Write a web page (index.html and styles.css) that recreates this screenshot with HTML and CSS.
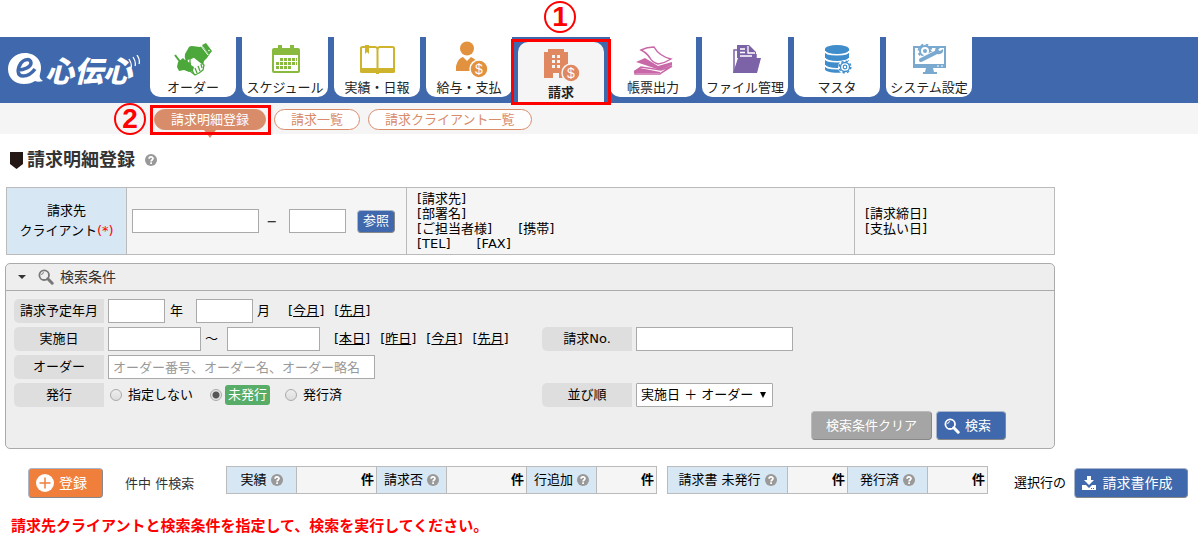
FILE: index.html
```html
<!DOCTYPE html>
<html lang="ja">
<head>
  <meta charset="UTF-8" />
  <meta name="viewport" content="width=device-width, initial-scale=1.0" />
  <title>請求明細登録 | e心伝心</title>
  <link rel="stylesheet" href="styles.css">
</head>
<body>
  <svg class="defs" width="0" height="0" aria-hidden="true">
    <symbol id="icon-help" viewBox="0 0 12 12">
      <circle cx="6" cy="6" r="6" fill="#999"/>
      <path d="M4.1 4.7C4.1 2.4 8 2.4 8 4.6 8 6 6.1 6 6.1 7.4" fill="none" stroke="#fff" stroke-width="1.7"/>
      <rect x="5.2" y="8.3" width="1.8" height="1.7" fill="#fff"/>
    </symbol>
    <symbol id="icon-search" viewBox="0 0 16 16">
      <circle cx="6.2" cy="6.2" r="4.8" fill="none" stroke="currentColor" stroke-width="1.8"/>
      <path d="M3.6 6A2.7 2.7 0 0 1 6 3.6" fill="none" stroke="currentColor" stroke-width="1"/>
      <path d="M9.8 9.8l4.4 4.4" stroke="currentColor" stroke-width="3" stroke-linecap="round"/>
    </symbol>
  </svg>

  <header class="header">
    <a class="logo" href="#" aria-label="e心伝心">
      <svg class="logo-mark" viewBox="0 0 38 34">
        <path d="M18 1C8 1 1 8 1 17s7 15 16 15c5 0 8-1 11-3 2 1 5 1 8 0-3-2-4-4-3-7C37 10 29 1 18 1z" fill="#fff"/>
        <path d="M11 18c6 0 13-3 13-7 0-5-7-4-10 0-4 6-4 13 2 13 5 0 9-3 12-7" fill="none" stroke="#3f69ac" stroke-width="3.5"/>
      </svg>
      <span class="logo-text">心伝心</span>
      <svg class="logo-wave" viewBox="0 0 12 16">
        <path d="M1 4c2 3 3 6 2 9M5 2c2 3 3 6 2 9M9 0c2 3 3 6 2 9" fill="none" stroke="#fff" stroke-width="1.3"/>
      </svg>
    </a>
    <nav class="tabs">
      <a class="tab" href="#">
        <svg viewBox="0 0 42 36">
          <path d="M13 12l4-7q1-1 3-1l8 1 2-1 7 9-2 3-3 3-1 5-11-8-4 2q-4 1-3-6z" fill="#4ca83a"/>
          <path d="M30 3l4-2 6 8-3 4z" fill="#4ca83a"/>
          <path d="M29 4l7 9" stroke="#fff" stroke-width="1"/>
          <circle cx="37" cy="8.500" r=".8" fill="#fff"/>
          <path d="M18 17l4-2 10 8-1 5-4 3-4 2-5-4z" fill="#fff" stroke="#4ca83a" stroke-width="1.300" stroke-linejoin="round"/>
          <path d="M20 28l2 4M23 26l2 5M26 24l2 5M29 22l1 4" fill="none" stroke="#4ca83a" stroke-width="1.300"/>
          <path d="M6 20l5-4 2 2 2-2 1 4 3 1v2l3 2-1 4-4 1-5-2-5 1-2-4z" fill="#4ca83a"/>
          <path d="M3 13l6 8" stroke="#4ca83a" stroke-width="2"/>
        </svg>
        オーダー
      </a>
      <a class="tab" href="#">
        <svg viewBox="0 0 42 36">
          <path d="M10 6h4V3h4v3h8V3h4v3h4q2 0 2 2v21q0 2-2 2H10q-2 0-2-2V8q0-2 2-2z" fill="#8aba3d"/>
          <rect x="10" y="13" width="24" height="16" fill="#fff"/>
          <path d="M16 17.500h17M12 21.500h21M12 25.500h16" stroke="#8aba3d" stroke-width="3" stroke-dasharray="3 1"/>
        </svg>
        スケジュール
      </a>
      <a class="tab" href="#">
        <svg viewBox="0 0 42 36">
          <path d="M5 6q0-1 2-1h12q2 0 2.500 2Q22 5 24 5h12q2 0 2 1v21H23l-1.500 2-1.500-2H5z" fill="#fff" stroke="#cdb42c" stroke-width="2"/>
          <path d="M4 26h15l2.500 2 2.500-2h15v4q0 1-2 1H23v1h-3v-1H6q-2 0-2-1z" fill="#cdb42c"/>
          <path d="M21.500 7v20" stroke="#cdb42c" stroke-width="2"/>
          <path d="M9 3h4v9l-2-2-2 2z" fill="#cdb42c"/>
        </svg>
        実績・日報
      </a>
      <a class="tab" href="#">
        <svg viewBox="0 0 42 36">
          <g fill="#e2923f">
            <circle cx="19" cy="6.500" r="7"/>
            <path d="M8 29v-5q2-8 7-9l4 4 4-4q5 2 6 6l-6 8z"/>
            <circle cx="31" cy="27" r="9" stroke="#fff" stroke-width="1.500"/>
          </g>
          <text class="coin" x="31" y="32">$</text>
        </svg>
        給与・支払
      </a>
      <div class="tab-current">
        <a class="tab active" href="#" aria-current="page">
          <svg viewBox="0 0 42 36">
            <path d="M4 5h4V2h16v3h4v26H4z" fill="#e08860"/>
            <path d="M12 9.500h3m2 0h3M12 14.500h3m2 0h3M12 19.500h3m2 0h3" stroke="#f5f5f5" stroke-width="3"/>
            <rect x="13" y="26" width="6" height="5" fill="#f5f5f5"/>
            <circle cx="31" cy="26" r="9" fill="#e08860" stroke="#f5f5f5" stroke-width="1.500"/>
            <text class="coin" x="31" y="31">$</text>
          </svg>
          請求
        </a>
        <span class="frame frame-tab"></span>
        <span class="step step-one">1</span>
      </div>
      <a class="tab" href="#">
        <svg viewBox="0 0 42 36">
          <path d="M3 29l6-4 20 3 11-4-11 7-1 1H3z" fill="#fff" stroke="#c868a8" stroke-width="1.500"/>
          <path d="M2 29l6-3 20 4v1H2z" fill="#c868a8"/>
          <path d="M4 20l9-4 13 8 14-4v3l-12 5z" fill="#c868a8"/>
          <path d="M9 8q6-3 13-3 5 9 17 12-6 4-13 5-6-2-8-6-3-5-9-8z" fill="#fff" stroke="#c868a8" stroke-width="1.500"/>
        </svg>
        帳票出力
      </a>
      <a class="tab" href="#">
        <svg viewBox="0 0 42 36">
          <path d="M10 31V8h3M32 12v4" fill="none" stroke="#7c63a8" stroke-width="1.500"/>
          <path d="M13 3h12l7 7v6H13z" fill="#7c63a8"/>
          <path d="M24 4v7h7M16 7h5M16 10.500h5M16 14h12" fill="none" stroke="#fff" stroke-width="1.300"/>
          <path d="M14 16h23l-4 15H9z" fill="#7c63a8"/>
        </svg>
        ファイル管理
      </a>
      <a class="tab" href="#">
        <svg viewBox="0 0 42 36">
          <path d="M9 7v20c0 5 24 5 24 0V7z" fill="#3f8dcb"/>
          <ellipse cx="21" cy="7" rx="12" ry="4" fill="#3f8dcb"/>
          <path d="M9 9c0 5 24 5 24 0M9 16c0 5 24 5 24 0M9 23c0 5 24 5 24 0" fill="none" stroke="#fff" stroke-width="1.500"/>
          <circle cx="29" cy="25" r="7" fill="#fff"/>
          <circle cx="29" cy="25" r="4.500" fill="#fff" stroke="#3f8dcb" stroke-width="1.300"/>
          <circle cx="29" cy="25" r="5.800" fill="none" stroke="#3f8dcb" stroke-width="1.500" stroke-dasharray="2.300 2.250"/>
          <circle cx="29" cy="25" r="1.800" fill="none" stroke="#3f8dcb" stroke-width="1.200"/>
        </svg>
        マスタ
      </a>
      <a class="tab" href="#">
        <svg viewBox="0 0 42 36">
          <path d="M6 5h31v20H6z" fill="#fff" stroke="#79a9cf" stroke-width="2"/>
          <path d="M5 22h33v4H5zM18 26h7l1 4h3v2H15v-2h2z" fill="#79a9cf"/>
          <path d="M29 24h2M33 24h2" stroke="#fff" stroke-width="1"/>
          <circle cx="17" cy="9" r="5" fill="#fff" stroke="#79a9cf" stroke-width="2"/>
          <circle cx="17" cy="9" r="6.500" fill="none" stroke="#79a9cf" stroke-width="1.800" stroke-dasharray="2.600 2.500"/>
          <circle cx="17" cy="9" r="2" fill="#79a9cf"/>
          <path d="M13 18l15-7" stroke="#fff" stroke-width="6"/>
          <path d="M13 18l16-8" stroke="#79a9cf" stroke-width="4" stroke-linecap="round"/>
          <path d="M33 5q-5-2-6 3 0 5 5 4 4-1 3-5l-3 2-2-1z" fill="#79a9cf"/>
        </svg>
        システム設定
      </a>
    </nav>
  </header>

  <nav class="subnav">
    <div class="pill-current">
      <a class="pill active" href="#" aria-current="page">請求明細登録</a>
      <span class="frame frame-pill"></span>
      <span class="step step-two">2</span>
    </div>
    <a class="pill" href="#">請求一覧</a>
    <a class="pill" href="#">請求クライアント一覧</a>
  </nav>

  <main>
    <h1 class="page-title">
      <svg class="title-mark" viewBox="0 0 13 17"><path d="M0 0h13v12l-6.500 5L0 12z" fill="#231815"/></svg>
      請求明細登録
      <svg class="help"><use href="#icon-help"/></svg>
    </h1>

    <table class="client">
      <tr>
        <th class="client-head"><label for="clientCode">請求先<br>クライアント<span class="required">(*)</span></label></th>
        <td class="client-input">
          <div class="client-fields">
            <input class="field w-code" id="clientCode" type="text">
            <span class="dash">−</span>
            <input class="field w-short" type="text" aria-label="クライアント枝番">
            <button class="btn btn-ref" type="button">参照</button>
          </div>
        </td>
        <td class="client-info">[請求先]<br>[部署名]<br>[ご担当者様]　　[携帯]<br>[TEL]　　[FAX]</td>
        <td class="client-date">[請求締日]<br>[支払い日]</td>
      </tr>
    </table>

    <form class="panel">
      <h2 class="panel-head">
        <button class="panel-toggle" type="button">
          <span class="caret"></span>
          <svg class="head-icon"><use href="#icon-search"/></svg>
          検索条件
        </button>
      </h2>
      <div class="panel-body">
        <div class="row">
          <div class="group">
            <label class="name" for="planYear">請求予定年月</label>
            <input class="field w-short" id="planYear" type="text">
            <span class="unit">年</span>
            <input class="field w-short" type="text" aria-label="請求予定月">
            <span>月</span>
            <div class="links links-month"><span>[<a href="#">今月</a>]</span><span>[<a href="#">先月</a>]</span></div>
          </div>
        </div>
        <div class="row">
          <div class="group">
            <label class="name" for="dateFrom">実施日</label>
            <input class="field w-date" id="dateFrom" type="text">
            <span class="tilde">～</span>
            <input class="field w-date" type="text" aria-label="実施日（終了）">
            <div class="links"><span>[<a href="#">本日</a>]</span><span>[<a href="#">昨日</a>]</span><span>[<a href="#">今月</a>]</span><span>[<a href="#">先月</a>]</span></div>
          </div>
          <div class="group">
            <label class="name" for="billNo">請求No.</label>
            <input class="field w-no" id="billNo" type="text">
          </div>
        </div>
        <div class="row">
          <div class="group">
            <label class="name" for="order">オーダー</label>
            <input class="field w-order" id="order" type="text" placeholder="オーダー番号、オーダー名、オーダー略名">
          </div>
        </div>
        <div class="row">
          <div class="group" role="radiogroup" aria-labelledby="issueName">
            <span class="name" id="issueName">発行</span>
            <div class="radios">
              <label class="radio"><input type="radio" name="issue">指定しない</label>
              <label class="radio"><input type="radio" name="issue" checked><span class="badge">未発行</span></label>
              <label class="radio"><input type="radio" name="issue">発行済</label>
            </div>
          </div>
          <div class="group">
            <label class="name" for="sort">並び順</label>
            <span class="select">
              <select id="sort"><option>実施日 ＋ オーダー</option></select>
            </span>
          </div>
        </div>
        <div class="buttons">
          <button class="btn btn-clear" type="reset">検索条件クリア</button>
          <button class="btn btn-search" type="button"><svg class="head-icon"><use href="#icon-search"/></svg>検索</button>
        </div>
      </div>
    </form>

    <div class="actions">
      <button class="btn btn-add" type="button">
        <svg class="plus" viewBox="0 0 18 18"><circle cx="9" cy="9" r="9" fill="#fff"/><path d="M9 3.500v11M3.500 9h11" stroke="#f07f3c" stroke-width="1.500"/></svg>
        登録
      </button>
      <span class="count">件中 件検索</span>
      <table class="summary">
        <tr>
          <th class="w70">実績<svg class="help"><use href="#icon-help"/></svg></th><td class="w80">件</td>
          <th class="w70">請求否<svg class="help"><use href="#icon-help"/></svg></th><td class="w80">件</td>
          <th class="w70">行追加<svg class="help"><use href="#icon-help"/></svg></th><td class="w60">件</td>
        </tr>
      </table>
      <table class="summary">
        <tr>
          <th class="w120">請求書 未発行<svg class="help"><use href="#icon-help"/></svg></th><td class="w60">件</td>
          <th class="w80">発行済<svg class="help"><use href="#icon-help"/></svg></th><td class="w60">件</td>
        </tr>
      </table>
      <div class="create">
        選択行の
        <button class="btn btn-create" type="button">
          <svg class="download" viewBox="0 0 14 14"><path d="M5 0h4v4h3L7 9 2 4h3z" fill="#fff"/><path d="M0 9h4l3 3 3-3h4v5H0z" fill="#fff"/><path d="M9 12.500h1M11 12.500h1" stroke="#3f69ac"/></svg>
          請求書作成
        </button>
      </div>
    </div>

    <p class="message">請求先クライアントと検索条件を指定して、検索を実行してください。</p>
  </main>
</body>
</html>
```

FILE: styles.css
```css
* {
  box-sizing: border-box;
  margin: 0;
  padding: 0;
}
body {
  font-family: "DejaVu Sans", "Noto Sans CJK JP", sans-serif;
  font-size: 13px;
  line-height: 20px;
  color: #000;
  background: #fff;
}
input,
select,
button {
  font: inherit;
  color: inherit;
}
a {
  color: inherit;
}
svg {
  flex: none;
}
.defs {
  display: block;
}

/* header */
.header {
  display: flex;
  height: 66px;
  margin-top: 37px;
  background: #3f69ac;
}
.logo {
  display: flex;
  flex: none;
  align-items: flex-start;
  width: 150px;
  padding: 15px 0 0 7px;
  color: #fff;
  text-decoration: none;
}
.logo-mark {
  width: 38px;
  height: 34px;
}
.logo-text {
  font-family: "Noto Sans CJK JP", sans-serif;
  font-size: 29px;
  font-weight: 900;
  font-style: italic;
  line-height: 34px;
}
.logo-wave {
  width: 12px;
  height: 16px;
  margin: 3px 0 0 -4px;
}
.tabs {
  display: flex;
  gap: 6px;
}
.tab {
  display: flex;
  flex-direction: column;
  align-items: center;
  width: 86px;
  height: 60px;
  padding-top: 5px;
  border-radius: 0 0 10px 10px;
  background: #fff;
  color: #222;
  line-height: 20px;
  white-space: nowrap;
  text-decoration: none;
}
.tab svg {
  width: 42px;
  height: 36px;
  overflow: visible;
}
.tab-current {
  position: relative;
  padding-top: 5px;
}
.tab.active {
  height: 61px;
  border-radius: 10px 10px 0 0;
  background: #f5f5f5;
  font-weight: bold;
}
.coin {
  fill: #fff;
  font-family: "Liberation Sans", sans-serif;
  font-size: 14px;
  font-weight: normal;
  text-anchor: middle;
}

/* red guide marks */
.frame {
  position: absolute;
  border: 3px solid #f00;
  pointer-events: none;
}
.frame-tab {
  inset: 2px -7px -2px;
}
.frame-pill {
  inset: -4px -5px -5px -4px;
}
.step {
  position: absolute;
  width: 32px;
  height: 32px;
  border: 2px solid #f00;
  border-radius: 50%;
  color: #f00;
  font-family: "Liberation Sans", sans-serif;
  font-size: 28px;
  font-weight: bold;
  line-height: 28px;
  text-align: center;
}
.step-one {
  top: -36px;
  left: 26px;
}
.step-two {
  top: -6px;
  left: -40px;
}

/* sub menu */
.subnav {
  display: flex;
  gap: 8px;
  height: 31px;
  padding: 6px 0 0 154px;
  background: #f5f5f5;
}
.pill-current {
  position: relative;
  height: 21px;
}
.pill {
  display: block;
  height: 21px;
  padding: 0 16px;
  border: 1px solid #d98c6a;
  border-radius: 11px;
  background: #fff;
  color: #d98c6a;
  line-height: 19px;
  text-decoration: none;
}
.pill.active {
  background: #d98c6a;
  color: #fff;
}
.pill.active::after {
  content: "";
  position: absolute;
  top: 21px;
  left: 50%;
  margin-left: -6px;
  border: 6px solid transparent;
  border-top: 8px solid #d98c6a;
  border-bottom: 0;
}

/* title */
main {
  padding: 16px 6px;
}
.page-title {
  display: flex;
  align-items: center;
  gap: 4px;
  height: 20px;
  padding-left: 4px;
  color: #333;
  font-size: 18px;
}
.title-mark {
  width: 13px;
  height: 17px;
}
.help {
  width: 12px;
  height: 12px;
}
.page-title .help {
  margin-left: 6px;
}

/* client table */
table {
  border-collapse: collapse;
}
th,
td {
  border: 1px solid #bbb;
  background: #f5f5f5;
}
th {
  background: #d7e7f4;
  font-weight: normal;
}
.client {
  width: 100%;
  max-width: 1049px;
  height: 68px;
  margin-top: 17px;
  table-layout: fixed;
}
.client td {
  line-height: 15px;
}
.client-head {
  width: 120px;
}
.client-input {
  width: 280px;
  padding-left: 5px;
}
.client-info {
  width: 448px;
  padding-left: 10px;
}
.client-date {
  padding-left: 10px;
}
.required {
  color: #f00;
}
.client-fields {
  display: flex;
  align-items: center;
}
.dash {
  width: 30px;
  padding-right: 4px;
  text-align: center;
}
.field {
  height: 24px;
  padding: 0 4px;
  border: 1px solid #aaa;
  background: #fff;
}
.field::placeholder {
  color: #999;
}
.w-code {
  width: 127px;
}
.w-short {
  width: 57px;
}
.w-date {
  width: 93px;
}
.w-no {
  width: 157px;
}
.w-order {
  width: 267px;
}

/* buttons */
.btn {
  display: flex;
  align-items: center;
  justify-content: center;
  border: 1px solid #3b62a1;
  border-color: #a9b6cc #888 #888 #a9b6cc;
  border-radius: 4px;
  background: #3f69ac;
  color: #fff;
  white-space: nowrap;
  cursor: pointer;
}
.btn-ref {
  width: 38px;
  height: 23px;
  margin-left: 11px;
  line-height: 18px;
}
.btn-clear {
  width: 121px;
  height: 29px;
  border-color: #bbb #888 #888 #bbb;
  background: #a5a5a5;
}
.btn-search {
  gap: 5px;
  width: 70px;
  height: 29px;
  padding-right: 7px;
}
.btn-add {
  gap: 5px;
  width: 75px;
  height: 30px;
  padding-right: 8px;
  background: #f07f3c;
  font-size: 14px;
}
.btn-create {
  gap: 7px;
  width: 114px;
  height: 30px;
  padding-right: 8px;
  font-size: 14px;
}
.head-icon {
  width: 16px;
  height: 16px;
}
.plus {
  width: 18px;
  height: 18px;
}
.download {
  width: 14px;
  height: 14px;
}

/* search panel */
.panel {
  max-width: 1050px;
  margin: 8px 0 0 -1px;
  border: 1px solid #aaa;
  border-radius: 5px;
  background: #eee;
}
.panel-head {
  border-bottom: 1px solid #aaa;
  font-weight: normal;
}
.panel-toggle {
  display: flex;
  align-items: center;
  gap: 6px;
  width: 100%;
  height: 26px;
  padding-left: 12px;
  border: 0;
  background: none;
  color: #333;
  font-size: 14px;
}
.panel-toggle .head-icon {
  margin-left: 6px;
  color: #777;
}
.caret {
  border: 4px solid transparent;
  border-top: 4px solid #333;
  border-bottom: 0;
}
.panel-body {
  display: flex;
  flex-direction: column;
  gap: 4px;
  padding: 8px;
}
.row {
  display: grid;
  grid-template-columns: 528px 1fr;
}
.group {
  display: flex;
  align-items: center;
  height: 24px;
}
.name {
  width: 90px;
  height: 24px;
  margin-right: 4px;
  border-radius: 5px 0 0 5px;
  background: #dedede;
  line-height: 24px;
  text-align: center;
}
.unit {
  margin: 0 13px 0 5px;
}
.unit ~ span {
  margin-left: 4px;
}
.tilde {
  width: 26px;
  padding-left: 4px;
}
.links {
  display: flex;
  gap: 10px;
  margin-left: 14px;
}
.links-month {
  margin-left: 18px;
}
.radios {
  display: flex;
  gap: 15px;
}
.radio {
  display: flex;
  align-items: center;
  gap: 6px;
}
.radio input {
  width: 12px;
  height: 12px;
  margin-left: 2px;
  border: 1px solid #aaa;
  border-radius: 50%;
  background: linear-gradient(#eee, #ddd);
  appearance: none;
}
.radio input:checked {
  background: radial-gradient(#555 0 3px, #e4e4e4 4px);
}
.badge {
  margin: 0 -2px 0 -3px;
  padding: 0 3px;
  border-radius: 3px;
  background: #57ad68;
  color: #fff;
}
.select {
  position: relative;
}
.select::after {
  content: "";
  position: absolute;
  top: 9px;
  right: 7px;
  border: 3px solid transparent;
  border-top: 6px solid #000;
  border-bottom: 0;
  pointer-events: none;
}
.select select {
  display: block;
  width: 137px;
  height: 24px;
  padding: 0 4px;
  border: 1px solid #aaa;
  border-radius: 1px;
  background: #fff;
  appearance: none;
}
.buttons {
  display: flex;
  justify-content: flex-end;
  gap: 4px;
  padding-right: 40px;
}

/* result bar */
.actions {
  display: flex;
  align-items: flex-start;
  margin: 17px 0 0 22px;
  white-space: nowrap;
}
.btn-add,
.create {
  margin-top: 2px;
}
.count {
  width: 101px;
  margin: 8px 0 0 22px;
  color: #333;
}
.summary {
  height: 28px;
  margin-right: 10px;
  table-layout: fixed;
}
.summary th .help {
  margin-left: 4px;
  vertical-align: -2px;
}
.summary td {
  padding-right: 2px;
  font-weight: bold;
  text-align: right;
}
.w60 {
  width: 60px;
}
.w70 {
  width: 70px;
}
.w80 {
  width: 80px;
}
.w120 {
  width: 120px;
}
.create {
  display: flex;
  align-items: center;
  gap: 8px;
  margin-left: 16px;
}
.message {
  margin: 18px 0 0 5px;
  color: #f00;
  font-size: 15px;
  font-weight: bold;
}
```
